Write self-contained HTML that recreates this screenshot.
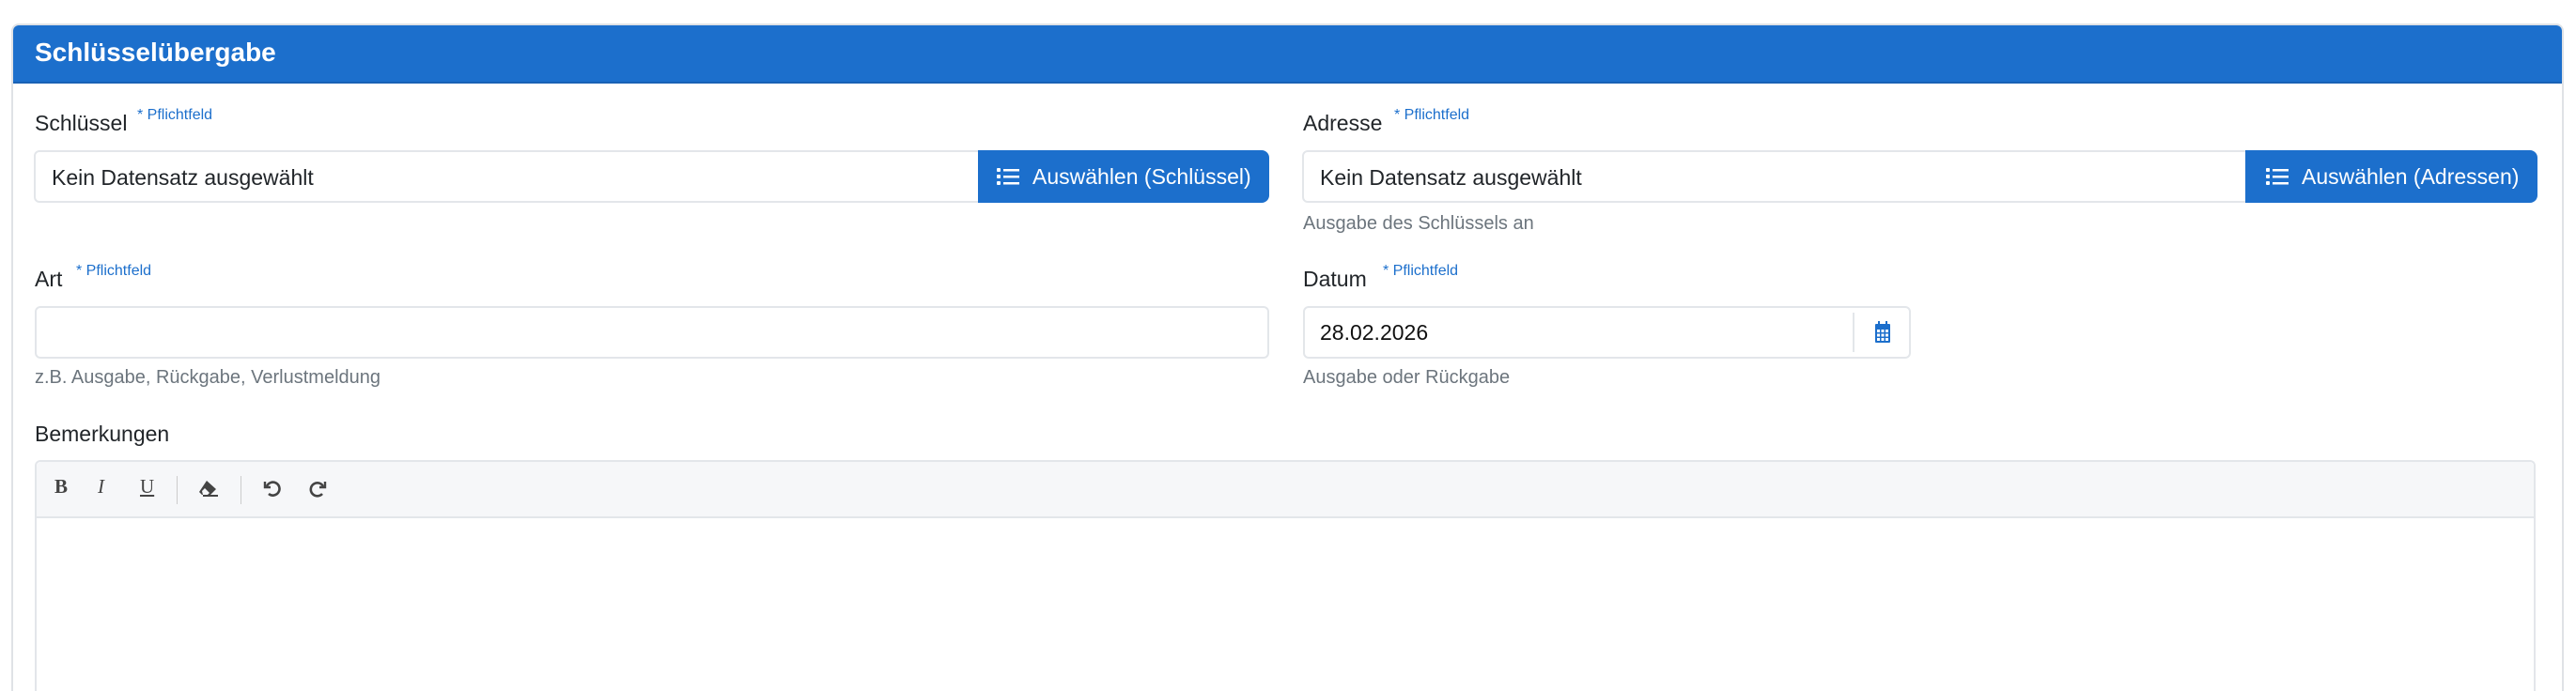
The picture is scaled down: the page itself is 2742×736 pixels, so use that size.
<!DOCTYPE html>
<html style="height:736px;overflow:hidden"><head><meta charset="utf-8"><style>
*{box-sizing:border-box;margin:0;padding:0}
body{width:2742px;height:736px;background:#fff;font-family:"Liberation Sans",sans-serif;color:#212529;position:relative;overflow:hidden}
.a{position:absolute;white-space:nowrap}
.card{position:absolute;left:12px;top:25px;width:2717px;height:711px;border:2px solid #dfe2e6;border-bottom:none;border-radius:8px 8px 0 0;overflow:hidden}
.hdr{position:absolute;left:0;top:0;right:0;height:62px;background:#1c6fcc;border-bottom:2px solid #1a62b5}
.lbl{font-size:23px;color:#212529}
.req{font-size:16px;color:#1c6fcc}
.inp{position:absolute;border:2px solid #e3e6ea;background:#fff;border-radius:6px}
.help{font-size:20px;color:#6c757d}
.btn{position:absolute;background:#1c6fcc;color:#fff;font-size:23px;border-radius:0 8px 8px 0;display:flex;align-items:center}
</style></head><body>
<div class="card"><div class="hdr"></div></div>
<div class="a" style="left:37px;top:40px;font-size:28px;font-weight:bold;color:#fff">Schlüsselübergabe</div>

<div class="a lbl" style="left:37px;top:118px">Schlüssel</div>
<div class="a req" style="left:146px;top:114px">* Pflichtfeld</div>
<div class="inp" style="left:36px;top:160px;width:1010px;height:56px;border-radius:6px 0 0 6px"></div>
<div class="a lbl" style="left:55px;top:176px">Kein Datensatz ausgewählt</div>
<div class="btn" style="left:1041px;top:160px;width:310px;height:56px">
<svg style="margin-left:20px" width="24" height="22" viewBox="0 0 24 22" fill="#fff"><rect x="0" y="2" width="4" height="4" rx="1"/><rect x="0" y="9" width="4" height="4" rx="1"/><rect x="0" y="16" width="4" height="4" rx="1"/><rect x="7" y="3" width="17" height="2.5"/><rect x="7" y="10" width="17" height="2.5"/><rect x="7" y="17" width="17" height="2.5"/></svg>
<span style="margin-left:14px">Auswählen (Schlüssel)</span></div>

<div class="a lbl" style="left:1387px;top:118px">Adresse</div>
<div class="a req" style="left:1484px;top:114px">* Pflichtfeld</div>
<div class="inp" style="left:1386px;top:160px;width:1010px;height:56px;border-radius:6px 0 0 6px"></div>
<div class="a lbl" style="left:1405px;top:176px">Kein Datensatz ausgewählt</div>
<div class="btn" style="left:2390px;top:160px;width:311px;height:56px">
<svg style="margin-left:22px" width="24" height="22" viewBox="0 0 24 22" fill="#fff"><rect x="0" y="2" width="4" height="4" rx="1"/><rect x="0" y="9" width="4" height="4" rx="1"/><rect x="0" y="16" width="4" height="4" rx="1"/><rect x="7" y="3" width="17" height="2.5"/><rect x="7" y="10" width="17" height="2.5"/><rect x="7" y="17" width="17" height="2.5"/></svg>
<span style="margin-left:14px">Auswählen (Adressen)</span></div>
<div class="a help" style="left:1387px;top:227px">Ausgabe des Schlüssels an</div>

<div class="a lbl" style="left:37px;top:284px">Art</div>
<div class="a req" style="left:81px;top:280px">* Pflichtfeld</div>
<div class="inp" style="left:37px;top:326px;width:1314px;height:56px"></div>
<div class="a help" style="left:37px;top:391px">z.B. Ausgabe, Rückgabe, Verlustmeldung</div>

<div class="a lbl" style="left:1387px;top:284px">Datum</div>
<div class="a req" style="left:1472px;top:280px">* Pflichtfeld</div>
<div class="inp" style="left:1387px;top:326px;width:647px;height:56px"></div>
<div class="a" style="left:1972px;top:333px;width:2px;height:42px;background:#e3e6ea"></div>
<div class="a lbl" style="left:1405px;top:341px;color:#111">28.02.2026</div>
<svg class="a" style="left:1996px;top:342px" width="16" height="24" viewBox="0 0 16 24" fill="#1c6fcc"><rect x="3" y="0" width="2" height="4"/><rect x="11" y="0" width="2" height="4"/><path d="M1 3h14a1 1 0 0 1 1 1v18a1 1 0 0 1-1 1H1a1 1 0 0 1-1-1V4a1 1 0 0 1 1-1z"/><g fill="#fff"><rect x="2" y="9" width="3" height="3"/><rect x="6.5" y="9" width="3" height="3"/><rect x="11" y="9" width="3" height="3"/><rect x="2" y="13.5" width="3" height="3"/><rect x="6.5" y="13.5" width="3" height="3"/><rect x="11" y="13.5" width="3" height="3"/><rect x="2" y="18" width="3" height="3"/><rect x="6.5" y="18" width="3" height="3"/><rect x="11" y="18" width="3" height="3"/></g></svg>
<div class="a help" style="left:1387px;top:391px">Ausgabe oder Rückgabe</div>

<div class="a lbl" style="left:37px;top:449px">Bemerkungen</div>
<div class="a" style="left:37px;top:490px;width:2662px;height:246px;border:2px solid #e3e6ea;border-bottom:none;border-radius:6px 6px 0 0;background:#fff"></div>
<div class="a" style="left:39px;top:492px;width:2658px;height:60px;background:#f6f7f9;border-bottom:2px solid #e3e6ea;border-radius:5px 5px 0 0"></div>
<div class="a" style="left:58px;top:506px;font:bold 21px 'Liberation Serif',serif;color:#444">B</div>
<div class="a" style="left:104px;top:506px;font:italic 21px 'Liberation Serif',serif;color:#444">I</div>
<div class="a" style="left:149px;top:506px;font:21px 'Liberation Serif',serif;color:#444;text-decoration:underline">U</div>
<div class="a" style="left:188px;top:507px;width:1px;height:30px;background:#ccc"></div>
<svg class="a" style="left:212px;top:511px" width="20" height="18" viewBox="0 0 20 18"><path d="M8 1l10 9-6 6H3L0 13z" fill="#444"/><path d="M3 12l3-3 5 5-2 2H4z" fill="#f6f7f9"/><rect x="4" y="16" width="16" height="2" fill="#444"/></svg>
<div class="a" style="left:256px;top:507px;width:1px;height:30px;background:#ccc"></div>
<svg class="a" style="left:280px;top:510px" width="20" height="20" viewBox="0 0 20 20" fill="none" stroke="#444" stroke-width="2.6"><path d="M4 8a7 7 0 1 1 2 8"/><path d="M2 3v6h6" stroke-width="2.4"/></svg>
<svg class="a" style="left:328px;top:510px" width="20" height="20" viewBox="0 0 20 20" fill="none" stroke="#444" stroke-width="2.6"><path d="M16 8a7 7 0 1 0-1 8"/><path d="M18 3v6h-6" stroke-width="2.4"/></svg>
</body></html>
